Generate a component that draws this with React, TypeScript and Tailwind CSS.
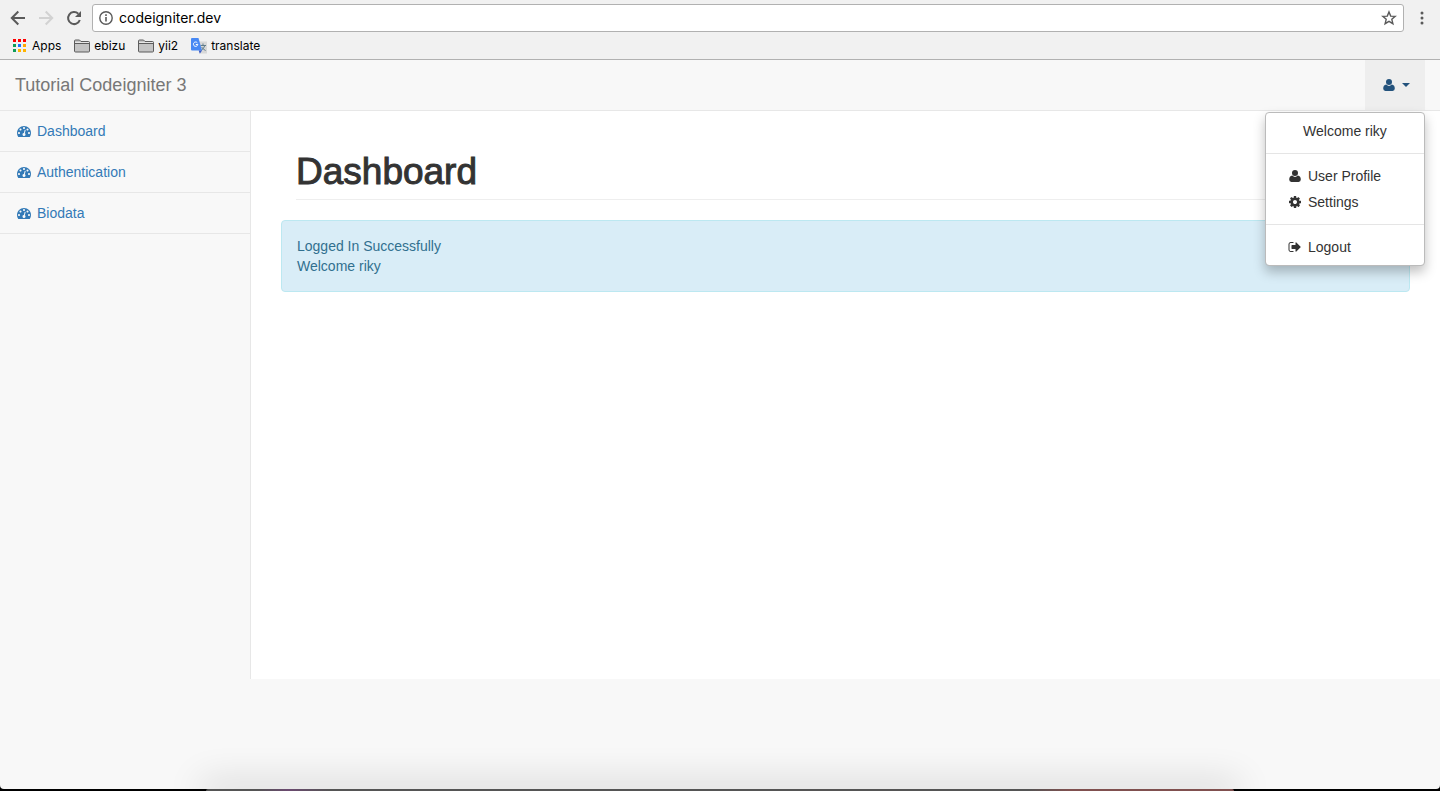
import React from "react";

const USER =
  "M538 845Q896 1178 1254 845Q1638 896 1638 1357Q1638 1664 1357 1664H435Q154 1664 154 1357Q154 896 538 845ZM896 128A384 384 0 1 1 896 896A384 384 0 1 1 896 128Z";
const COG =
  "M1152 896q0-106-75-181t-181-75-181 75-75 181 75 181 181 75 181-75 75-181zm512-109v222q0 12-8 23t-20 13l-185 28q-19 54-39 91 35 50 107 138 10 12 10 25t-9 23q-27 37-99 108t-94 71q-12 0-26-9l-138-108q-44 23-91 38-16 136-29 186-7 28-36 28h-222q-14 0-24.5-8.5t-11.5-21.5l-28-184q-49-16-90-37l-141 107q-10 9-25 9-14 0-25-11-126-114-165-168-7-10-7-23 0-12 8-23 15-21 51-66.5t54-70.5q-27-50-41-99l-183-27q-13-2-21-12.5t-8-23.5v-222q0-12 8-23t19-13l186-28q14-46 39-92-40-57-107-138-10-12-10-24 0-10 9-23 26-36 98.5-107.5t94.5-71.5q13 0 26 10l138 107q44-23 91-38 16-136 29-186 7-28 36-28h222q14 0 24.5 8.5t11.5 21.5l28 184q49 16 90 37l142-107q9-9 24-9 13 0 25 10 129 119 165 170 7 8 7 22 0 12-8 23-15 21-51 66.5t-54 70.5q26 50 41 98l183 28q13 2 21 12.5t8 23.5z";
const SIGN_OUT =
  "M704 1440q0 4 1 20t.5 26.5-3 23.5-10 19.5-20.5 6.5h-320q-119 0-203.5-84.5t-84.5-203.5v-704q0-119 84.5-203.5t203.5-84.5h320q13 0 22.5 9.5t9.5 22.5q0 4 1 20t.5 26.5-3 23.5-10 19.5-20.5 6.5h-320q-66 0-113 47t-47 113v704q0 66 47 113t113 47h312l11.5 1 11.5 3 8 5.5 7 9 2 13.5zm928-544q0 26-19 45l-544 544q-19 19-45 19t-45-19-19-45v-288h-448q-26 0-45-19t-19-45v-384q0-26 19-45t45-19h448v-288q0-26 19-45t45-19 45 19l544 544q19 19 19 45z";
const GAUGE =
  "M384 1152q0-53-37.5-90.5t-90.5-37.5-90.5 37.5-37.5 90.5 37.5 90.5 90.5 37.5 90.5-37.5 37.5-90.5zm192-448q0-53-37.5-90.5t-90.5-37.5-90.5 37.5-37.5 90.5 37.5 90.5 90.5 37.5 90.5-37.5 37.5-90.5zm428 481l101-382q6-26-7.5-48.5t-38.5-29.5-48 6.5-30 39.5l-101 382q-60 5-107 43.5t-63 98.5q-20 77 20 146t117 89 146-20 89-117q16-60-6-117t-72-91zm660-33q0-53-37.5-90.5t-90.5-37.5-90.5 37.5-37.5 90.5 37.5 90.5 90.5 37.5 90.5-37.5 37.5-90.5zm-640-640q0-53-37.5-90.5t-90.5-37.5-90.5 37.5-37.5 90.5 37.5 90.5 90.5 37.5 90.5-37.5 37.5-90.5zm448 192q0-53-37.5-90.5t-90.5-37.5-90.5 37.5-37.5 90.5 37.5 90.5 90.5 37.5 90.5-37.5 37.5-90.5zm320 448q0 261-141 483-19 29-54 29h-1402q-35 0-54-29-141-221-141-483 0-182 71-348t191-286 286-191 348-71 348 71 286 191 191 286 71 348z";

function Glyph({ d }: { d: string }) {
  return (
    <svg viewBox="0 0 1792 1792" className="size-[14px] shrink-0" fill="currentColor" aria-hidden="true">
      <path d={d} />
    </svg>
  );
}

function Folder() {
  return (
    <svg viewBox="0 0 16 14" className="h-[14px] w-4" aria-hidden="true">
      <path d="M.5 12V2Q.5 1 1.5 1H5.5L7 2.5H14.5Q15.5 2.5 15.5 3.5V12Q15.5 13 14.5 13H1.5Q.5 13 .5 12Z" fill="#c4c4c4" stroke="#5c5c5c" />
      <path d="M1 4.5H15" stroke="#5c5c5c" />
      <path d="M1 3.5H15" stroke="#e6e6e6" />
    </svg>
  );
}

function AppsGrid() {
  const colors = ["#f00", "#f00", "#f00", "#0f9d58", "#1a73ff", "#ffa800", "#0f9d58", "#ffb400", "#ffb400"];
  return (
    <svg viewBox="0 0 13 13" className="size-[13px]" aria-hidden="true">
      {colors.map((c, i) => (
        <rect key={i} x={(i % 3) * 5} y={Math.floor(i / 3) * 5} width="3" height="3" fill={c} />
      ))}
    </svg>
  );
}

function TranslateLogo() {
  return (
    <svg viewBox="0 0 16 16" className="size-4" aria-hidden="true">
      <path d="M6 3.5H16V15.5H9Z" fill="#d8d8d8" />
      <path d="M9.5 7.5H15M12 5.5V7.5M13.8 7.5Q13 10.8 10 12.5M10.6 9Q12 11.4 14.6 12.5" stroke="#607d8b" fill="none" />
      <path d="M1 0H7.5L11 12.5H1Q0 12.5 0 11.5V1Q0 0 1 0Z" fill="#4889f4" />
      <path d="M7.7 12.5H11L8.8 15.8Z" fill="#3a5bc7" />
      <path d="M6.4 4.9A2.2 2.2 0 1 0 6.8 6.5H4.8" stroke="#fff" fill="none" />
    </svg>
  );
}

function Toolbar() {
  return (
    <header className="border-b border-[#b1b1b1] bg-[#f1f1f1] pt-1 font-[Inter,sans-serif] text-[12px] text-black">
      <div className="flex items-center pr-[10px] pl-[10px]">
        <button aria-label="Back" className="text-[#5a5a5a]">
          <svg viewBox="0 0 16 16" className="size-4" fill="none" stroke="currentColor" strokeWidth="2">
            <path d="M15 8H2M8.3 1.5L1.8 8L8.3 14.5" />
          </svg>
        </button>
        <button aria-label="Forward" className="ml-3 text-[#d2d2d2]">
          <svg viewBox="0 0 16 16" className="size-4" fill="none" stroke="currentColor" strokeWidth="2">
            <path d="M1 8H14M7.7 1.5L14.2 8L7.7 14.5" />
          </svg>
        </button>
        <button aria-label="Reload" className="ml-3 text-[#5a5a5a]">
          <svg viewBox="0 0 16 16" className="size-4" fill="none" stroke="currentColor" strokeWidth="2">
            <path d="M13.8 10A6 6 0 1 1 12.3 3.8" />
            <path d="M15 1V7H9Z" fill="currentColor" stroke="none" />
          </svg>
        </button>
        <div className="ml-[10px] flex h-7 flex-1 items-center rounded-[3px] border border-[#b1b1b1] bg-white pr-[6px] pl-[6px]">
          <svg viewBox="0 0 14 14" className="size-[14px] shrink-0" fill="none" stroke="#5a5a5a" aria-hidden="true">
            <circle cx="7" cy="7" r="6.2" strokeWidth="1.4" />
            <path d="M7 6V10.5M7 3.3V4.9" strokeWidth="1.6" />
          </svg>
          <input aria-label="Address" defaultValue="codeigniter.dev" className="ml-[6px] min-w-0 flex-1 bg-transparent text-[14px] outline-none" />
          <button aria-label="Bookmark this page">
            <svg viewBox="0 0 16 16" className="size-4" fill="none" stroke="#5a5a5a" strokeWidth="1.4">
              <path d="M8 1.9L9.7 6.1L14.2 6.4L10.8 9.3L11.9 13.7L8 11.3L4.1 13.7L5.2 9.3L1.8 6.4L6.3 6.1Z" />
            </svg>
          </button>
        </div>
        <button aria-label="Browser menu" className="ml-[10px]">
          <svg viewBox="0 0 16 16" className="size-4" fill="#5a5a5a">
            <circle cx="8" cy="3" r="1.5" />
            <circle cx="8" cy="8" r="1.5" />
            <circle cx="8" cy="13" r="1.5" />
          </svg>
        </button>
      </div>
      <nav aria-label="Bookmarks" className="flex h-[27px] items-center gap-[13px] pl-[13px]">
        <a href="#apps" className="flex items-center gap-[6px]"><AppsGrid />Apps</a>
        <a href="#ebizu" className="flex items-center gap-1"><Folder />ebizu</a>
        <a href="#yii2" className="flex items-center gap-1"><Folder />yii2</a>
        <a href="#translate" className="flex items-center gap-1"><TranslateLogo />translate</a>
      </nav>
    </header>
  );
}

function MenuItem({ icon, label }: { icon: string; label: string }) {
  return (
    <a href={"#" + label} className="flex items-center gap-[6px] py-[3px] pl-[22px]">
      <Glyph d={icon} />
      {label}
    </a>
  );
}

function UserMenu() {
  return (
    <div className="relative mr-[15px]">
      <button aria-label="User menu" aria-expanded="true" className="flex h-[50px] w-[60px] items-center justify-center gap-[6px] bg-[#eee] pl-[2px] text-[#23527c]">
        <Glyph d={USER} />
        <svg viewBox="0 0 8 4" className="h-1 w-2" fill="currentColor" aria-hidden="true"><path d="M0 0H8L4 4Z" /></svg>
      </button>
      <div className="absolute top-[52px] right-0 z-10 w-40 rounded border border-[#bbb] bg-white bg-clip-padding py-[5px] text-[#333] shadow-[0_6px_12px_rgba(0,0,0,0.25)]">
        <div className="py-[3px] text-center">Welcome riky</div>
        <hr className="my-[9px] border-[#e5e5e5]" />
        <MenuItem icon={USER} label="User Profile" />
        <MenuItem icon={COG} label="Settings" />
        <hr className="my-[9px] border-[#e5e5e5]" />
        <MenuItem icon={SIGN_OUT} label="Logout" />
      </div>
    </div>
  );
}

export default function App() {
  return (
    <div className="relative flex min-h-screen flex-col overflow-hidden bg-black pb-[2px] font-['Liberation_Sans',Arial,sans-serif] text-[14px] leading-5">
      <div className="flex flex-1 flex-col overflow-hidden rounded-b-[4px] bg-[#f8f8f8]">
        <Toolbar />
        <nav className="flex items-center justify-between border-b border-[#e7e7e7]">
          <a href="#home" className="pl-[15px] text-[18px] text-[#777]">Tutorial Codeigniter 3</a>
          <UserMenu />
        </nav>
        <div className="flex min-h-[568px]">
          <aside className="w-[251px] shrink-0 border-r border-[#e7e7e7] text-[#337ab7]">
            {["Dashboard", "Authentication", "Biodata"].map((name) => (
              <a key={name} href={"#" + name} className="flex items-center gap-[6px] border-b border-[#e7e7e7] py-[10px] pl-[17px]">
                <Glyph d={GAUGE} />
                {name}
              </a>
            ))}
          </aside>
          <main className="flex-1 bg-white px-[30px] pt-[41px]">
            <h1 className="mx-[15px] mb-5 border-b border-[#eee] pb-[7px] text-[37px] leading-10 text-[#333] [-webkit-text-stroke:1px_#333]">Dashboard</h1>
            <div role="status" className="rounded border border-[#bce8f1] bg-[#d9edf7] p-[15px] text-[#31708f]">
              <p>Logged In Successfully</p>
              <p>Welcome riky</p>
            </div>
          </main>
        </div>
      </div>
      <div className="pointer-events-none absolute inset-x-[206px] bottom-0 h-[2px] rounded-t-[2px] bg-[linear-gradient(90deg,#555_0_5%,#6b4a70_8%,#555_12%_80%,#80504f_84%_100%)] shadow-[0_0_36px_6px_rgba(0,0,0,0.2)]" />
    </div>
  );
}
